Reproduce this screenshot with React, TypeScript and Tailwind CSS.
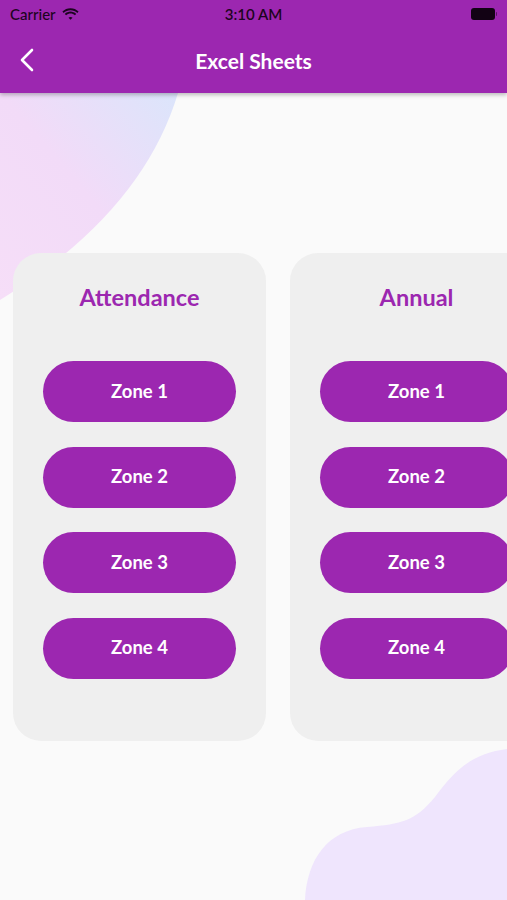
import React from 'react'

const zones = ['Zone 1', 'Zone 2', 'Zone 3', 'Zone 4']
const sheets = ['Attendance', 'Annual']

function StatusBar() {
  return (
    <div className="relative flex h-[28px] items-center px-[10px] text-[15px] text-[#1c0420]">
      <div className="flex items-center gap-[6px]">
        <span className="font-medium">Carrier</span>
        <svg width="17" height="12" viewBox="0 0 17 12" fill="#1c0420">
          <path d="M8.5 2.2c2.6 0 5 1 6.8 2.7l1.3-1.4C14.4 1.4 11.6.2 8.5.2S2.6 1.4.4 3.5l1.3 1.4C3.5 3.2 5.9 2.2 8.5 2.2z" />
          <path d="M8.5 5.6c1.7 0 3.2.6 4.4 1.7l1.3-1.4c-1.5-1.4-3.5-2.3-5.7-2.3S4.3 4.5 2.8 5.9l1.3 1.4c1.2-1.1 2.7-1.7 4.4-1.7z" />
          <path d="M8.5 8.9c.8 0 1.5.3 2 .8L8.5 11.8 6.5 9.7c.5-.5 1.2-.8 2-.8z" />
        </svg>
      </div>
      <span className="absolute left-1/2 -translate-x-1/2 font-semibold">3:10 AM</span>
      <div className="ml-auto flex items-center">
        <div className="h-[12px] w-[24px] rounded-[3px] bg-[#120214]" />
        <div className="ml-[1px] h-[4px] w-[1.5px] rounded-r bg-[#120214] opacity-50" />
      </div>
    </div>
  )
}

function NavBar() {
  return (
    <div className="relative flex h-[65px] items-center justify-center">
      <svg className="absolute left-[19px] top-[20px]" width="16" height="24" viewBox="0 0 16 24" fill="none">
        <path d="M13 2 3 12l10 10" stroke="white" strokeWidth="2.6" strokeLinecap="round" strokeLinejoin="round" />
      </svg>
      <h1 className="text-[21px] font-bold text-white">Excel Sheets</h1>
    </div>
  )
}

function SheetCard({ title }: { title: string }) {
  return (
    <div className="flex h-[488px] w-[253px] shrink-0 flex-col items-center rounded-[28px] bg-[#efefef] pt-[28px]">
      <h2 className="text-[23.5px] font-bold leading-[32px] text-[#9c27b0]">{title}</h2>
      <div className="mt-[48px] flex flex-col gap-[24.5px]">
        {zones.map((z) => (
          <button
            key={z}
            className="h-[61px] w-[193px] rounded-full bg-[#9c27b0] text-[18.5px] font-bold text-white"
          >
            {z}
          </button>
        ))}
      </div>
    </div>
  )
}

export default function App() {
  return (
    <div
      className="relative h-[900px] w-[507px] overflow-hidden bg-[#fafafa]"
      style={{ fontFamily: 'Lato, "Open Sans", sans-serif' }}
    >
      <svg className="absolute left-0 top-[93px]" width="180" height="210" viewBox="0 0 180 210">
        <defs>
          <linearGradient id="blob" x1="0" y1="1" x2="1" y2="0">
            <stop offset="0" stopColor="#f6def8" />
            <stop offset="0.5" stopColor="#f2dbf8" />
            <stop offset="1" stopColor="#dbe5fb" />
          </linearGradient>
        </defs>
        <path d="M0 0H178Q142 120 0 207Z" fill="url(#blob)" />
      </svg>
      <svg className="absolute bottom-0 right-0" width="210" height="155" viewBox="0 0 210 155">
        <path
          d="M8 155C10 115 30 85 70 82C105 79 118 76 138 52C160 22 178 8 210 4V155Z"
          fill="#efe5fd"
        />
      </svg>

      <div className="relative bg-[#9c27b0] shadow-[0_2px_4px_rgba(0,0,0,0.25)]">
        <StatusBar />
        <NavBar />
      </div>

      <div className="relative mt-[160px] flex gap-[24px] pl-[13px]">
        {sheets.map((s) => (
          <SheetCard key={s} title={s} />
        ))}
      </div>
    </div>
  )
}
